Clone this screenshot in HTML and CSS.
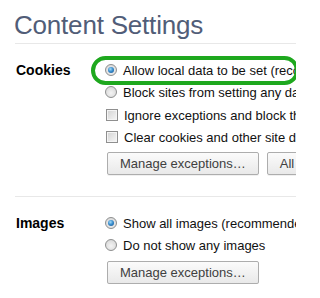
FILE: index.html
```html
<!DOCTYPE html>
<html>
<head>
<meta charset="utf-8">
<link rel="stylesheet" href="styles.css">
</head>
<body>
<div class="page">
  <h1 class="title">Content Settings</h1>
  <section class="section cookies">
    <div class="label">Cookies</div>
    <div class="options">
      <div class="opt marked"><span class="radio checked"></span>Allow local data to be set (recommended)<span class="oval"></span></div>
      <div class="opt"><span class="radio"></span>Block sites from setting any data</div>
      <div class="opt"><span class="check"></span>Ignore exceptions and block third-party cookies</div>
      <div class="opt"><span class="check"></span>Clear cookies and other site data when I close my browser</div>
      <div class="buttons"><button class="btn">Manage exceptions…</button><button class="btn">All cookies and site data…</button></div>
    </div>
  </section>
  <section class="section images">
    <div class="label">Images</div>
    <div class="options">
      <div class="opt"><span class="radio checked"></span>Show all images (recommended)</div>
      <div class="opt"><span class="radio"></span>Do not show any images</div>
      <div class="buttons"><button class="btn">Manage exceptions…</button></div>
    </div>
  </section>
</div>
</body>
</html>
```

FILE: styles.css
```css
html, body {
  margin: 0;
  padding: 0;
  background: #fff;
  overflow: hidden;
}
body {
  width: 296px;
  height: 298px;
  font-family: "Liberation Sans", Arial, sans-serif;
  color: #111;
}
.page {
  padding-left: 15px;
  white-space: nowrap;
  overflow: hidden;
}
.title {
  margin: 0 0 3px -1px;
  padding-top: 10px;
  font-size: 26px;
  line-height: 30px;
  font-weight: normal;
  color: #515d78;
  letter-spacing: -0.2px;
}
.section {
  border-top: 1px solid #e8e8e8;
  display: flex;
}
.cookies {
  padding: 15.4px 0 21px;
}
.images {
  padding: 15.4px 0 0;
}
.label {
  width: 90px;
  flex: none;
  padding-left: 1px;
  box-sizing: border-box;
  font-weight: bold;
  font-size: 14px;
  line-height: 22.3px;
  color: #000;
}
.options {
  display: flex;
  flex-direction: column;
}
.opt {
  position: relative;
  display: flex;
  align-items: center;
  height: 22.3px;
  font-size: 13px;
  color: #111;
}
.radio {
  position: relative;
  flex: none;
  width: 10px;
  height: 10px;
  margin-right: 6px;
  margin-top: -1px;
  border: 1px solid #8e8f8f;
  border-radius: 50%;
  background: radial-gradient(circle at 50% 60%, #f4f4f4 0%, #dcdcdc 70%, #c9c9c9 100%);
}
.radio.checked::after {
  content: "";
  position: absolute;
  left: 2px;
  top: 2px;
  width: 6px;
  height: 6px;
  border-radius: 50%;
  background: radial-gradient(circle at 40% 35%, #a6dcf7 0%, #3b8fcf 45%, #0f4c8a 100%);
}
.check {
  flex: none;
  width: 10px;
  height: 10px;
  margin: -1px 6px 0 1px;
  border: 1px solid #8f8f8f;
  background: linear-gradient(135deg, #d2d2d2 0%, #e8e8e8 60%, #f6f6f6 100%);
  box-shadow: inset 0 0 0 1px #f4f4f4;
}
.oval {
  position: absolute;
  left: -14px;
  top: -3px;
  width: 200px;
  height: 21px;
  border: 4px solid #1ea81e;
  border-radius: 15px;
}
.buttons {
  display: flex;
  gap: 8px;
  margin-left: 2px;
}
.cookies .buttons {
  margin-top: 3.5px;
}
.images .buttons {
  margin-top: 4.4px;
}
.btn {
  flex: none;
  height: 23px;
  padding: 0 12px;
  border: 1px solid #adadad;
  border-radius: 2px;
  background: linear-gradient(#fbfbfb, #e9e9e9);
  box-shadow: 0 1px 0 rgba(0, 0, 0, 0.06);
  font-family: "Liberation Sans", Arial, sans-serif;
  font-size: 13px;
  color: #404040;
  line-height: 21px;
}
```
